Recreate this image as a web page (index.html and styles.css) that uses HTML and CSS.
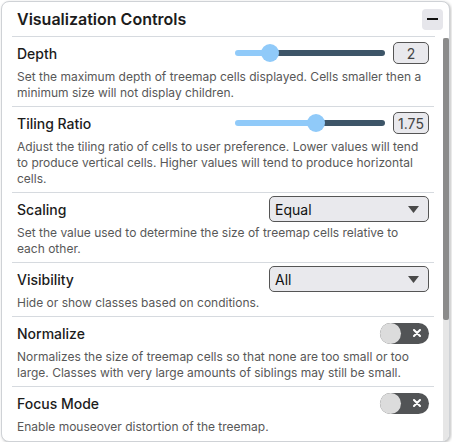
FILE: index.html
```html
<!DOCTYPE html>
<html>
<head>
<meta charset="utf-8">
<link rel="stylesheet" href="styles.css">
</head>
<body>
<div class="panel">
  <div class="head">
    <h1 class="title">Visualization Controls</h1>
    <button class="collapse" aria-label="Collapse"><span class="minus"></span></button>
  </div>
  <div class="head-rule"></div>
  <div class="body">
    <div class="controls">
      <section class="ctl">
        <div class="row">
          <span class="label">Depth</span>
          <input type="range" class="slider" min="1" max="6" step="1" value="2" style="background: linear-gradient(to right, #90caf9 0 35px, #3d5568 35px);">
          <span class="val">2</span>
        </div>
        <p class="desc">Set the maximum depth of treemap cells displayed. Cells smaller then a minimum size will not display children.</p>
      </section>
      <section class="ctl">
        <div class="row">
          <span class="label">Tiling Ratio</span>
          <input type="range" class="slider" min="0.25" max="3" step="0.05" value="1.75" style="background: linear-gradient(to right, #90caf9 0 81px, #3d5568 81px);">
          <span class="val">1.75</span>
        </div>
        <p class="desc">Adjust the tiling ratio of cells to user preference. Lower values will tend to produce vertical cells. Higher values will tend to produce horizontal cells.</p>
      </section>
      <section class="ctl">
        <div class="row">
          <span class="label">Scaling</span>
          <div class="select"><span>Equal</span><svg class="caret" width="11" height="7" viewBox="0 0 11 7"><path d="M0 0H11L5.5 7Z" fill="#4a4a4a"/></svg></div>
        </div>
        <p class="desc">Set the value used to determine the size of treemap cells relative to each other.</p>
      </section>
      <section class="ctl">
        <div class="row">
          <span class="label">Visibility</span>
          <div class="select"><span>All</span><svg class="caret" width="11" height="7" viewBox="0 0 11 7"><path d="M0 0H11L5.5 7Z" fill="#4a4a4a"/></svg></div>
        </div>
        <p class="desc">Hide or show classes based on conditions.</p>
      </section>
      <section class="ctl">
        <div class="row">
          <span class="label">Normalize</span>
          <div class="toggle"><span class="knob"></span><svg class="x" width="8" height="8" viewBox="0 0 8 8"><path d="M1 1L7 7M7 1L1 7" stroke="#fff" stroke-width="2" stroke-linecap="round"/></svg></div>
        </div>
        <p class="desc">Normalizes the size of treemap cells so that none are too small or too large. Classes with very large amounts of siblings may still be small.</p>
      </section>
      <section class="ctl">
        <div class="row">
          <span class="label">Focus Mode</span>
          <div class="toggle"><span class="knob"></span><svg class="x" width="8" height="8" viewBox="0 0 8 8"><path d="M1 1L7 7M7 1L1 7" stroke="#fff" stroke-width="2" stroke-linecap="round"/></svg></div>
        </div>
        <p class="desc">Enable mouseover distortion of the treemap.</p>
      </section>
    </div>
    <div class="scrollbar"><div class="thumb"></div></div>
  </div>
</div>
</body>
</html>
```
FILE: styles.css
```css
* { box-sizing: border-box; }
html, body { margin: 0; padding: 0; background: #ffffff; }
body { font-family: Inter, "Noto Sans", "Liberation Sans", sans-serif; }

.panel {
  margin: 1px 0 0 1px;
  width: 449px;
  height: 441px;
  border: 1px solid #cfd2d6;
  border-radius: 8px;
  box-shadow: 1px 1px 3px rgba(0,0,0,0.25);
  background: #fff;
  overflow: hidden;
  padding-left: 10px;
  display: flex;
  flex-direction: column;
}

.head {
  height: 34px;
  display: flex;
  align-items: center;
  justify-content: space-between;
  padding: 0 6px 0 5px;
}
.title {
  margin: 0;
  font-size: 16px;
  font-weight: 600;
  color: #1c1c1c;
}
.collapse {
  width: 21px;
  height: 21px;
  border: none;
  border-radius: 4px;
  background: #e6e6eb;
  padding: 0;
  display: flex;
  align-items: center;
  justify-content: center;
}
.minus {
  width: 11px;
  height: 2px;
  background: #111;
}
.head-rule {
  height: 1px;
  background: #d6dadf;
  margin-right: 14px;
}

.body {
  flex: 1;
  display: flex;
  gap: 9px;
  overflow: hidden;
}
.controls {
  width: 422px;
  flex: none;
}
.ctl {
  padding: 5px 0;
  border-bottom: 1px solid #d6dadf;
}
.ctl:last-child { border-bottom: none; }
.row {
  height: 22px;
  display: flex;
  align-items: center;
  padding: 0 5px;
  gap: 8px;
}
.label {
  flex: 1;
  font-size: 14px;
  font-weight: 500;
  color: #1c1c1c;
}
.desc {
  margin: 5px 0 0;
  padding: 0 5px;
  font-size: 12px;
  line-height: 16px;
  color: #585858;
}

.slider {
  -webkit-appearance: none;
  appearance: none;
  width: 150px;
  height: 6px;
  margin: 0;
  border-radius: 3px;
  outline: none;
}
.slider::-webkit-slider-thumb {
  -webkit-appearance: none;
  appearance: none;
  width: 18px;
  height: 18px;
  border-radius: 50%;
  background: #90caf9;
  border: none;
}
.val {
  width: 36px;
  height: 22px;
  border: 1px solid #555;
  border-radius: 5px;
  background: #e9e9ed;
  font-size: 14px;
  color: #444;
  display: flex;
  align-items: center;
  justify-content: center;
}

.select {
  width: 160px;
  height: 26px;
  flex: none;
  border: 1px solid #555;
  border-radius: 5px;
  background: #e9e9ed;
  display: flex;
  align-items: center;
  justify-content: space-between;
  padding: 0 9px 0 5px;
  font-size: 14px;
  color: #111;
}

.toggle {
  width: 49px;
  height: 21px;
  flex: none;
  border-radius: 11px;
  background: #525456;
  display: flex;
  align-items: center;
  justify-content: space-between;
  padding-right: 8px;
}
.knob {
  width: 21px;
  height: 21px;
  border-radius: 50%;
  background: #dcdcdc;
}

.scrollbar {
  width: 6px;
  flex: none;
  margin-top: 1px;
  background: #e6e6e6;
  display: flex;
  flex-direction: column;
}
.thumb {
  height: 282px;
  background: #8b8b8b;
  border-radius: 2px;
}
```
